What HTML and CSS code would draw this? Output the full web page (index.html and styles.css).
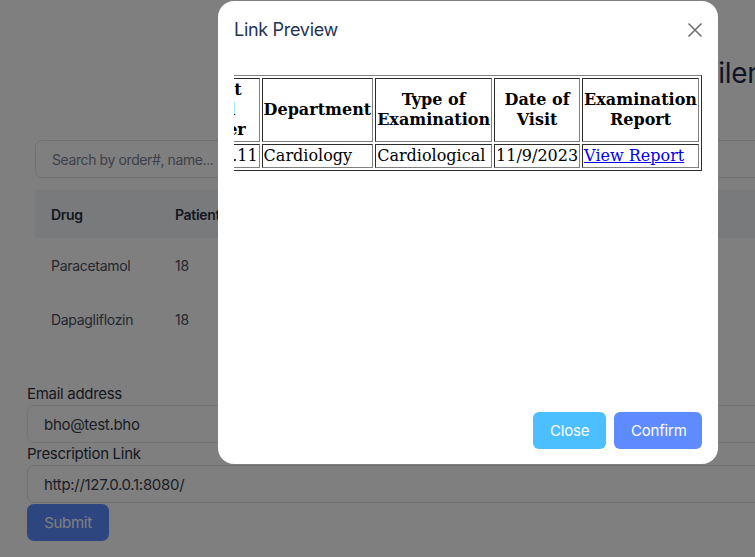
FILE: index.html
```html
<!DOCTYPE html>
<html>
<head>
<meta charset="utf-8">
<link rel="stylesheet" href="styles.css">
</head>
<body>
<div class="page">
  <h1 class="page-title">Filenames</h1>
  <div class="orders">
    <input class="search" type="text" placeholder="Search by order#, name...">
    <table class="drug-table">
      <thead>
        <tr><th class="c-drug">Drug</th><th>Patient ID</th><th>Quantity</th><th>Status</th></tr>
      </thead>
      <tbody>
        <tr><td>Paracetamol</td><td>18</td><td>2</td><td>Pending</td></tr>
        <tr><td>Dapagliflozin</td><td>18</td><td>1</td><td>Pending</td></tr>
      </tbody>
    </table>
  </div>
  <form class="send-form">
    <label class="label">Email address</label>
    <input class="field" type="text" value="bho@test.bho">
    <label class="label">Prescription Link</label>
    <input class="field" type="text" value="http://127.0.0.1:8080/">
    <button type="button" class="submit">Submit</button>
  </form>
</div>

<div class="overlay">
  <div class="modal">
    <div class="modal-header">
      <span class="modal-title">Link Preview</span>
      <svg class="close-x" width="16" height="16" viewBox="0 0 16 16"><path d="M1.5 1.5 L14.5 14.5 M14.5 1.5 L1.5 14.5" stroke="#6b6b6b" stroke-width="1.5" fill="none"/></svg>
    </div>
    <div class="modal-body">
      <div class="preview">
        <table class="report" border="1">
          <tr>
            <th>Patient<br>Serial<br>Number</th>
            <th>Department</th>
            <th>Type of<br>Examination</th>
            <th>Date of<br>Visit</th>
            <th>Examination<br>Report</th>
          </tr>
          <tr>
            <td>1023456.11</td>
            <td>Cardiology</td>
            <td>Cardiological</td>
            <td>11/9/2023</td>
            <td><a href="#">View Report</a></td>
          </tr>
        </table>
      </div>
    </div>
    <div class="modal-footer">
      <button type="button" class="btn btn-close">Close</button>
      <button type="button" class="btn btn-confirm">Confirm</button>
    </div>
  </div>
</div>
</body>
</html>
```

FILE: styles.css
```css
html, body {
  margin: 0;
  padding: 0;
  overflow: hidden;
  background: #ffffff;
  font-family: "Inter", "Open Sans", sans-serif;
}
.page {
  width: 940px;
  height: 557px;
  display: flex;
  flex-direction: column;
}
.page-title {
  margin: 0;
  padding: 55px 0 0 702px;
  font-size: 28px;
  line-height: 36px;
  font-weight: 400;
  color: #1d2a4d;
  white-space: nowrap;
  letter-spacing: -0.3px;
}
.orders {
  padding: 49px 0 0 35px;
  display: flex;
  flex-direction: column;
  gap: 12px;
}
.search {
  width: 800px;
  height: 38px;
  box-sizing: border-box;
  border: 1px solid #dfe2e8;
  border-radius: 7px;
  padding: 0 16px;
  font: 14px "Inter", sans-serif;
  letter-spacing: -0.4px;
  color: #333;
  outline: none;
}
.search::placeholder { color: #7c8293; }
.drug-table {
  width: 800px;
  border-collapse: collapse;
  font-size: 14px;
  letter-spacing: -0.3px;
}
.drug-table th {
  text-align: left;
  font-weight: 600;
  color: #2a2f3d;
  background: #f3f4f7;
  height: 48px;
  padding: 0 16px;
}
.drug-table th.c-drug { width: 92px; }
.drug-table td {
  height: 54px;
  padding: 0 16px;
  color: #4a4f5e;
}
.send-form {
  padding: 37px 0 0 27px;
  display: flex;
  flex-direction: column;
  width: 900px;
}
.label {
  font-size: 15px;
  line-height: 22px;
  color: #2c3140;
  letter-spacing: -0.3px;
}
.field {
  height: 38px;
  box-sizing: border-box;
  border: 1px solid #e3e5ea;
  border-radius: 7px;
  padding: 0 16px;
  font: 15px "Inter", sans-serif;
  letter-spacing: -0.3px;
  color: #3a3f4c;
  margin-bottom: 0;
}
.submit {
  align-self: flex-start;
  margin-top: 1px;
  height: 37px;
  width: 82px;
  border: none;
  border-radius: 7px;
  background: #5c8cff;
  color: #fff;
  font: 15px "Inter", sans-serif;
  letter-spacing: -0.3px;
}

.overlay {
  position: fixed;
  inset: 0;
  background: rgba(0, 0, 0, 0.5);
  padding: 1px 0 0 218px;
}
.modal {
  width: 500px;
  height: 463px;
  background: #fff;
  border-radius: 16px;
  display: flex;
  flex-direction: column;
  box-sizing: border-box;
}
.modal-header {
  display: flex;
  align-items: center;
  justify-content: space-between;
  padding: 16px 15px 16px 16px;
}
.modal-title {
  font-size: 18px;
  line-height: 26px;
  color: #243452;
  letter-spacing: -0.3px;
}
.close-x { display: block; }
.modal-body {
  flex: 1;
  padding: 16px 16px 0 16px;
  min-height: 0;
}
.preview {
  display: flex;
  justify-content: flex-end;
  overflow: hidden;
}
.report {
  flex: none;
  font-family: "DejaVu Serif", serif;
  font-size: 16px;
  line-height: 20px;
  color: #000;
  border-color: #808080;
}
.report th, .report td {
  padding: 1px;
}
.report a { color: #0000ee; }
.modal-footer {
  display: flex;
  justify-content: flex-end;
  gap: 8px;
  padding: 0 16px 15px 0;
}
.btn {
  height: 37px;
  border: none;
  border-radius: 6px;
  color: #fff;
  font: 15px "Inter", sans-serif;
  letter-spacing: -0.2px;
  padding: 0 17px;
}
.btn-close { background: #4bbfff; width: 73px; }
.btn-confirm { background: #5e8bff; width: 88px; }
```
